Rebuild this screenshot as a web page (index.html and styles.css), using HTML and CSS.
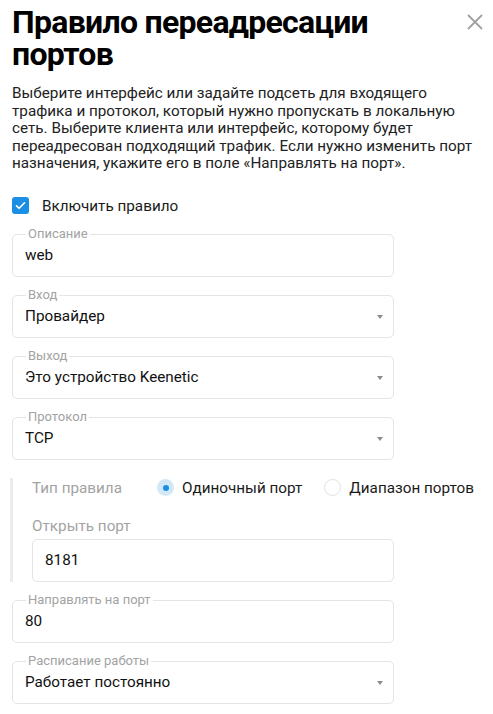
FILE: index.html
```html
<!DOCTYPE html>
<html lang="ru">
<head>
<meta charset="utf-8">
<link rel="stylesheet" href="styles.css">
</head>
<body>
<div class="page">
  <header class="head">
    <h1 class="title">Правило переадресации портов</h1>
    <button class="close" aria-label="Закрыть">
      <svg width="16" height="16" viewBox="0 0 16 16"><path d="M1 1L15 15M15 1L1 15" stroke="#a0a0a0" stroke-width="1.8" fill="none"/></svg>
    </button>
  </header>
  <p class="desc">Выберите интерфейс или задайте подсеть для входящего трафика и протокол, который нужно пропускать в локальную сеть. Выберите клиента или интерфейс, которому будет переадресован подходящий трафик. Если нужно изменить порт назначения, укажите его в поле «Направлять на порт».</p>

  <label class="check">
    <span class="box"><svg width="11" height="9" viewBox="0 0 11 9"><path d="M1.5 4.8L4.2 7.3L9.5 1.8" stroke="#fff" stroke-width="1.6" fill="none" stroke-linecap="round" stroke-linejoin="round"/></svg></span>
    <span class="check-label">Включить правило</span>
  </label>

  <div class="form">
    <div class="field">
      <span class="flabel">Описание</span>
      <span class="value">web</span>
    </div>
    <div class="field select">
      <span class="flabel">Вход</span>
      <span class="value">Провайдер</span>
      <span class="arrow"></span>
    </div>
    <div class="field select">
      <span class="flabel">Выход</span>
      <span class="value">Это устройство Keenetic</span>
      <span class="arrow"></span>
    </div>
    <div class="field select">
      <span class="flabel">Протокол</span>
      <span class="value">TCP</span>
      <span class="arrow"></span>
    </div>

    <div class="section">
      <div class="radio-row">
        <span class="rlabel">Тип правила</span>
        <span class="radio on"><span class="dot"></span></span>
        <span class="ropt">Одиночный порт</span>
        <span class="radio"></span>
        <span class="ropt">Диапазон портов</span>
      </div>
      <div class="plain-label">Открыть порт</div>
      <div class="field plain">
        <span class="value">8181</span>
      </div>
    </div>

    <div class="field">
      <span class="flabel">Направлять на порт</span>
      <span class="value">80</span>
    </div>
    <div class="field select">
      <span class="flabel">Расписание работы</span>
      <span class="value">Работает постоянно</span>
      <span class="arrow"></span>
    </div>
  </div>
</div>
</body>
</html>
```
FILE: styles.css
```css
* { box-sizing: border-box; }
html, body { margin: 0; padding: 0; background: #fff; }
body { font-family: Roboto, "Noto Sans", sans-serif; color: #1a1a1a; }
.page { padding: 6px 10px 0 12px; width: 493px; }
.head { display: flex; justify-content: space-between; align-items: flex-start; }
.title { margin: 0; font-size: 32px; line-height: 32px; font-weight: 700; color: #000; width: 420px; letter-spacing: -0.7px; }
.close { border: 0; background: none; padding: 0; margin: 8px 0 0 0; width: 16px; height: 16px; display: flex; align-items: center; justify-content: center; }
.desc { margin: 15px 0 0 0; font-size: 15.25px; line-height: 17.6px; color: #222; }
.check { display: flex; align-items: center; margin-top: 24px; height: 18px; }
.box { width: 17px; height: 17px; border-radius: 3px; background: #1a8fe3; display: flex; align-items: center; justify-content: center; }
.check-label { margin-left: 13px; font-size: 15.25px; color: #1a1a1a; }
.form { width: 382px; margin-top: 19px; display: flex; flex-direction: column; }
.field { position: relative; height: 43px; border: 1px solid #e4e4e4; border-radius: 5px; display: flex; align-items: center; padding: 0 12px; margin-top: 18px; }
.form > .field:first-child { margin-top: 0; }
.flabel { position: absolute; left: 13px; top: -9px; padding: 0 2px; background: #fff; font-size: 13px; line-height: 16px; color: #a3a3a3; }
.value { font-size: 15.25px; color: #111; }
.arrow { position: absolute; right: 10px; top: 19px; width: 0; height: 0; border-left: 3.5px solid transparent; border-right: 3.5px solid transparent; border-top: 4px solid #8c8c8c; }
.section { margin: 18px 0 0 -2px; border-left: 3px solid #ececec; padding-left: 19px; width: 473px; }
.radio-row { display: flex; align-items: center; height: 20px; }
.rlabel { font-size: 15.25px; color: #a3a3a3; width: 125px; }
.radio { width: 17px; height: 17px; border-radius: 50%; border: 1px solid #e2e2e2; background: #fff; display: flex; align-items: center; justify-content: center; }
.radio.on { border: 0; background: #d3e8f7; }
.dot { width: 6px; height: 6px; border-radius: 50%; background: #1a8fe3; }
.ropt { font-size: 15.25px; color: #1a1a1a; margin-left: 8px; margin-right: 22px; }
.ropt:last-child { margin-right: 0; }
.plain-label { font-size: 15.25px; color: #a3a3a3; margin-top: 19px; line-height: 18px; }
.field.plain { margin-top: 4px; width: 362px; }
```
